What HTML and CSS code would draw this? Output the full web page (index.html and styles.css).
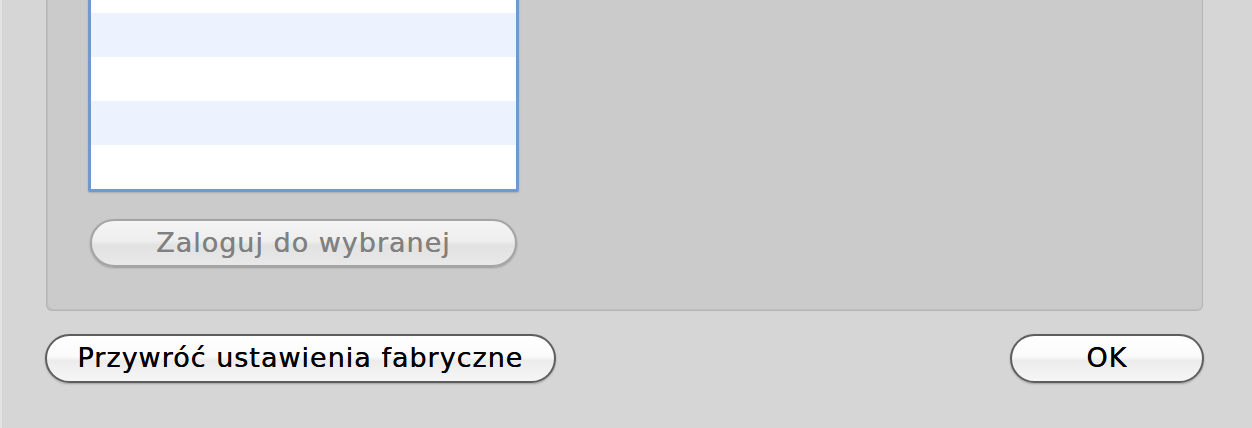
FILE: index.html
```html
<!DOCTYPE html>
<html lang="pl">
<head>
	<meta charset="utf-8">
	<title>Ustawienia</title>
	<link rel="stylesheet" href="styles.css">
</head>
<body>
	<div class="window">
		<div class="group">
			<div class="list">
				<div class="row"></div>
				<div class="row alt"></div>
				<div class="row"></div>
				<div class="row alt"></div>
				<div class="row"></div>
			</div>
			<button class="pill login" disabled>Zaloguj do wybranej</button>
		</div>
		<div class="footer">
			<button class="pill reset">Przywróć ustawienia fabryczne</button>
			<button class="pill ok">OK</button>
		</div>
	</div>
</body>
</html>
```

FILE: styles.css
```css
html, body {
	margin: 0;
	height: 428px;
	overflow: hidden;
}
body {
	background-color: #d6d6d6;
	font-family: "DejaVu Sans", "Liberation Sans", sans-serif;
}
.window {
	height: 428px;
	border-left: 2px solid #e4e4e4;
	box-sizing: border-box;
}
.group {
	margin-left: 44px;
	width: 1157px;
	height: 311px;
	box-sizing: border-box;
	background-color: #cbcbcb;
	border: 1px solid #b4b4b4;
	border-top: none;
	border-radius: 0 0 6px 6px;
	box-shadow: inset 1px -1px 1px rgba(0, 0, 0, 0.06);
	padding-left: 41px;
	overflow: hidden;
}
.list {
	margin-top: -34px;
	width: 431px;
	box-sizing: border-box;
	border: 3px solid #6f9ad0;
	border-radius: 2px;
	background-color: white;
	box-shadow: 0 1px 2px rgba(0, 0, 0, 0.15);
}
.row {
	height: 44px;
}
.row.alt {
	background-color: #edf3fe;
}
.pill {
	display: block;
	box-sizing: border-box;
	height: 49px;
	border-radius: 25px;
	border: 2px solid #5e5e5e;
	background: linear-gradient(#ffffff 0%, #fbfbfb 45%, #ececec 55%, #f6f6f6 100%);
	box-shadow: 0 1px 2px rgba(0, 0, 0, 0.25);
	font-family: inherit;
	font-size: 27px;
	letter-spacing: 1px;
	text-shadow: 0 0 0.6px currentColor;
	color: black;
	padding: 0 0 2px;
}
.login {
	margin: 27px 0 0 2px;
	width: 427px;
	height: 48px;
	border-color: #a4a4a4;
	background: linear-gradient(#f4f4f4 0%, #eeeeee 45%, #e2e2e2 55%, #e8e8e8 100%);
	color: #808080;
}
.footer {
	display: flex;
	justify-content: space-between;
	margin: 23px 0 0 43px;
	width: 1159px;
}
.reset {
	width: 511px;
}
.ok {
	width: 194px;
}
```
